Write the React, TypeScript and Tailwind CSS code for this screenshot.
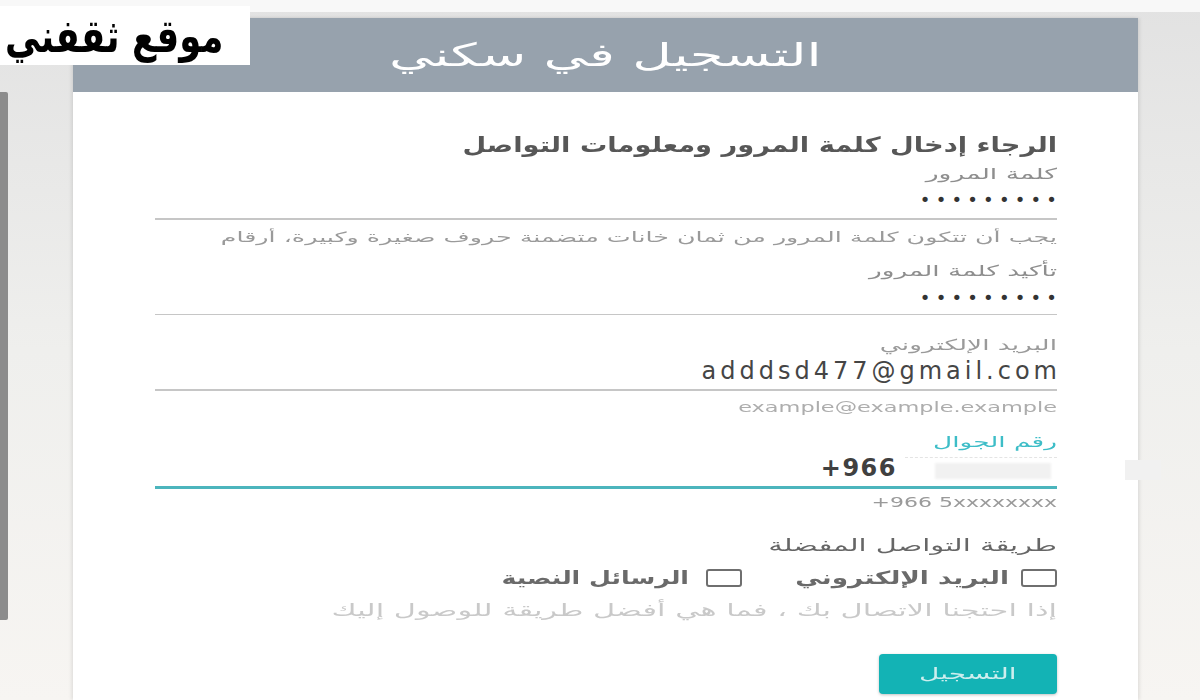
import React from "react";

const AR = { fontFamily: '"DejaVu Sans", "Noto Sans", sans-serif' };
const DJ = { fontFamily: '"DejaVu Sans", sans-serif' };

function Checkbox() {
  return <div className="w-[36px] h-[18px] rounded-[3px] border-2 border-[#6f6f6f] bg-white shrink-0" />;
}

function Dots() {
  return (
    <div className="flex justify-end" dir="ltr">
      <span className="text-[18px] leading-[24px] text-[#333] tracking-[5.2px] -mr-[5.2px]" style={DJ}>•••••••••</span>
    </div>
  );
}

export default function App() {
  return (
    <div className="w-[1200px] h-[700px] overflow-hidden bg-gradient-to-b from-[#e2e2e2] via-[#efefed] to-[#f7f5f2] flex flex-col relative" style={AR}>
      <div className="h-[12px] bg-[#f8f8f8] shrink-0" />
      <div className="flex flex-1 min-h-0">
        {/* left background strip */}
        <div className="w-[73px] shrink-0 flex">
          <div className="w-[8px] h-[528px] mt-[80px] bg-[#8c8c8c] rounded-r-[2px]" />
        </div>
        {/* card */}
        <div className="w-[1065px] shrink-0 mt-[6px] bg-white shadow-[-2px_0_3px_rgba(0,0,0,0.08),2px_0_3px_rgba(0,0,0,0.08)] flex flex-col">
          <div className="h-[74px] bg-[#97a2ad] flex items-center justify-center">
            <span className="inline-block text-white text-[32px] leading-[40px] font-medium scale-x-[1.7] origin-center" dir="rtl">التسجيل في سكني</span>
          </div>
          <div dir="rtl" className="pr-[81px] pl-[82px] pt-[39px] flex flex-col">
            <div className="text-[21px] leading-[28px] text-[#575757] font-semibold scale-x-[1.3] origin-right">الرجاء إدخال كلمة المرور ومعلومات التواصل</div>
            <div className="mt-[4px] text-[15px] leading-[22px] text-[#8e8e8e] scale-x-[1.78] origin-right">كلمة المرور</div>
            <div className="mt-[3px]"><Dots /></div>
            <div className="mt-[6px] h-[1.5px] bg-[#c6c6c6]" />
            <div className="mt-[7px] text-[14px] leading-[20px] text-[#9a9a9a] scale-x-[1.81] origin-right whitespace-nowrap">يجب أن تتكون كلمة المرور من ثمان خانات متضمنة حروف صغيرة وكبيرة، أرقام</div>
            <div className="mt-[13px] text-[15px] leading-[22px] text-[#8e8e8e] scale-x-[1.76] origin-right">تأكيد كلمة المرور</div>
            <div className="mt-[4px]"><Dots /></div>
            <div className="mt-[4px] h-[1.5px] bg-[#c6c6c6]" />
            <div className="mt-[19px] text-[15px] leading-[22px] text-[#9a9a9a] scale-x-[1.76] origin-right">البريد الإلكتروني</div>
            <div className="mt-[1px] flex justify-end" dir="ltr">
              <span className="text-[24px] leading-[28px] text-[#454545] tracking-[4px] -mr-[4px]" style={DJ}>adddsd477@gmail.com</span>
            </div>
            <div className="mt-[4px] h-[1.5px] bg-[#c6c6c6]" />
            <div className="mt-[6px] text-[14px] leading-[20px] text-[#adadad] scale-x-[1.6] origin-right" dir="ltr" style={DJ}><div className="text-right">example@example.example</div></div>
            <div className="mt-[14px] text-[15px] leading-[22px] text-[#3dbdc7] scale-x-[1.76] origin-right">رقم الجوال</div>
            <div className="mt-[1px] h-[28px] flex items-center gap-[8px]" dir="ltr">
              <div className="flex-1" />
              <span className="text-[24px] leading-[28px] text-[#404040] font-semibold tracking-[1.5px]" style={DJ}>+966</span>
              <div className="w-[152px] h-[26px] flex flex-col justify-between pt-[2px] pb-[2px]">
                <div className="h-[1px] border-t border-dashed border-[#e4e4e4]" />
                <div className="h-[16px] ml-[30px] mr-[6px] bg-[#f1f1f1] blur-[1px]" />
              </div>
            </div>
            <div className="mt-[4px] h-[3px] bg-[#4cb5bd]" />
            <div className="mt-[3px] text-[14px] leading-[20px] text-[#9a9a9a] scale-x-[1.57] origin-right" dir="ltr" style={DJ}><div className="text-right">+966 5xxxxxxxx</div></div>
            <div className="mt-[20px] text-[17px] leading-[26px] text-[#666] scale-x-[1.7] origin-right">طريقة التواصل المفضلة</div>
            <div className="mt-[6px] h-[28px] flex items-center">
              <Checkbox />
              <div className="w-[225px] shrink-0 pr-[12px]">
                <div className="text-[18px] leading-[28px] font-bold text-[#6a6a6a] scale-x-[1.46] origin-right whitespace-nowrap">البريد الإلكتروني</div>
              </div>
              <span className="w-[54px] shrink-0" />
              <Checkbox />
              <div className="w-[204px] shrink-0 pr-[17px]">
                <div className="text-[18px] leading-[28px] font-bold text-[#6a6a6a] scale-x-[1.4] origin-right whitespace-nowrap">الرسائل النصية</div>
              </div>
            </div>
            <div className="mt-[5px] text-[17px] leading-[26px] text-[#c9c9c9] scale-x-[1.79] origin-right whitespace-nowrap">إذا احتجنا الاتصال بك ، فما هي أفضل طريقة للوصول إليك</div>
            <div className="mt-[31px] flex">
              <div className="w-[178px] h-[40px] rounded-[4px] bg-[#13b3b5] shadow-[0_1px_3px_rgba(0,0,0,0.25)] flex items-center justify-center">
                <span className="inline-block text-[16px] text-[#cdeeee] scale-x-[1.75]">التسجيل</span>
              </div>
            </div>
          </div>
        </div>
        <div className="flex-1 flex flex-col">
          <div className="mt-[448px] h-[20px] w-[36px] -ml-[13px] bg-[#f1f1f1]" />
        </div>
      </div>
      {/* logo overlay */}
      <div className="absolute left-0 top-[6px] w-[250px] h-[59px] bg-white flex items-center justify-start pl-[5px] overflow-hidden">
        <span dir="rtl" className="inline-block whitespace-nowrap text-[46px] leading-[56px] font-bold text-black scale-x-[0.77] origin-left" style={AR}>موقع ثقفني</span>
      </div>
    </div>
  );
}
